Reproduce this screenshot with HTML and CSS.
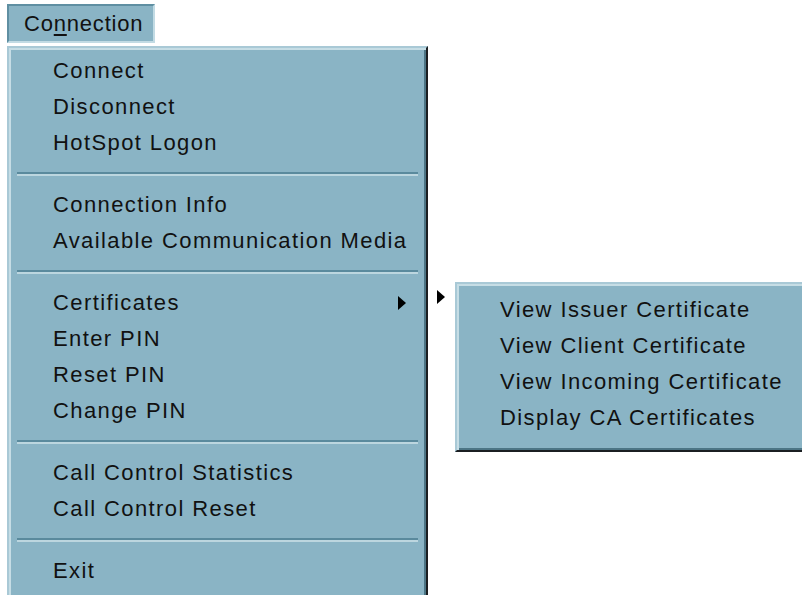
FILE: index.html
```html
<!DOCTYPE html>
<html>
<head>
<meta charset="utf-8">
<title>Connection menu</title>
<link rel="stylesheet" href="styles.css">
</head>
<body>
<div class="page">
  <div class="menubar">
    <div class="menubar-item">Co<u>n</u>nection</div>
  </div>
  <div class="menus">
    <div class="menu main-menu">
      <div class="item">Connect</div>
      <div class="item">Disconnect</div>
      <div class="item">HotSpot Logon</div>
      <div class="sep"></div>
      <div class="item">Connection Info</div>
      <div class="item">Available Communication Media</div>
      <div class="sep"></div>
      <div class="item has-sub">Certificates<span class="arrow"></span></div>
      <div class="item">Enter PIN</div>
      <div class="item">Reset PIN</div>
      <div class="item">Change PIN</div>
      <div class="sep"></div>
      <div class="item">Call Control Statistics</div>
      <div class="item">Call Control Reset</div>
      <div class="sep"></div>
      <div class="item">Exit</div>
    </div>
    <span class="arrow outside-arrow"></span>
    <div class="menu sub-menu">
      <div class="item">View Issuer Certificate</div>
      <div class="item">View Client Certificate</div>
      <div class="item">View Incoming Certificate</div>
      <div class="item">Display CA Certificates</div>
    </div>
  </div>
</div>
</body>
</html>
```

FILE: styles.css
```css
html, body {
  margin: 0;
  padding: 0;
  background: #ffffff;
  width: 802px;
  height: 595px;
  overflow: hidden;
}

.page {
  padding: 4px 0 0 7px;
  font-family: "Liberation Sans", Arial, sans-serif;
  font-size: 22px;
  letter-spacing: 1.4px;
  color: #111111;
}

.menubar {
  display: flex;
}

.menubar-item {
  width: 148px;
  height: 39px;
  box-sizing: border-box;
  background: #8ab4c5;
  border-top: 2px solid #5f8fa2;
  border-left: 2px solid #5f8fa2;
  border-right: 2px solid #c2dbe4;
  border-bottom: 2px solid #c2dbe4;
  padding-left: 15px;
  display: flex;
  align-items: center;
  letter-spacing: 0.8px;
}

.menubar-item u {
  text-underline-offset: 3px;
}

.menus {
  display: flex;
  align-items: flex-start;
  margin-top: 3px;
}

.menu {
  flex: none;
  background: #8ab4c5;
  box-sizing: border-box;
  border-top: 2px solid #a9c9d6;
  border-left: 2px solid #a9c9d6;
  border-right: 2px solid #1b1f22;
  border-bottom: 2px solid #1b1f22;
  box-shadow: inset 2px 2px 0 #c6dde5, inset -2px -2px 0 #4c7585;
}

.main-menu {
  width: 421px;
  height: 560px;
  padding: 5px 8px 0 44px;
}

.item {
  height: 36px;
  display: flex;
  align-items: center;
  white-space: nowrap;
  position: relative;
}

.has-sub .arrow {
  position: absolute;
  right: 12px;
  top: 11px;
}

.arrow {
  flex: none;
  width: 0;
  height: 0;
  border-top: 7px solid transparent;
  border-bottom: 7px solid transparent;
  border-left: 8px solid #000000;
}

.outside-arrow {
  display: block;
  margin: 244px 0 0 9px;
}

.sep {
  height: 26px;
  margin-left: -36px;
  display: flex;
  align-items: center;
}

.sep::before {
  content: "";
  display: block;
  width: 100%;
  height: 2px;
  background: #5a8a9d;
  border-bottom: 2px solid #bcd6df;
}

.sub-menu {
  width: 380px;
  margin: 236px 0 0 10px;
  padding: 8px 0 14px 43px;
}

.sub-menu .item {
  height: 36px;
}
```
